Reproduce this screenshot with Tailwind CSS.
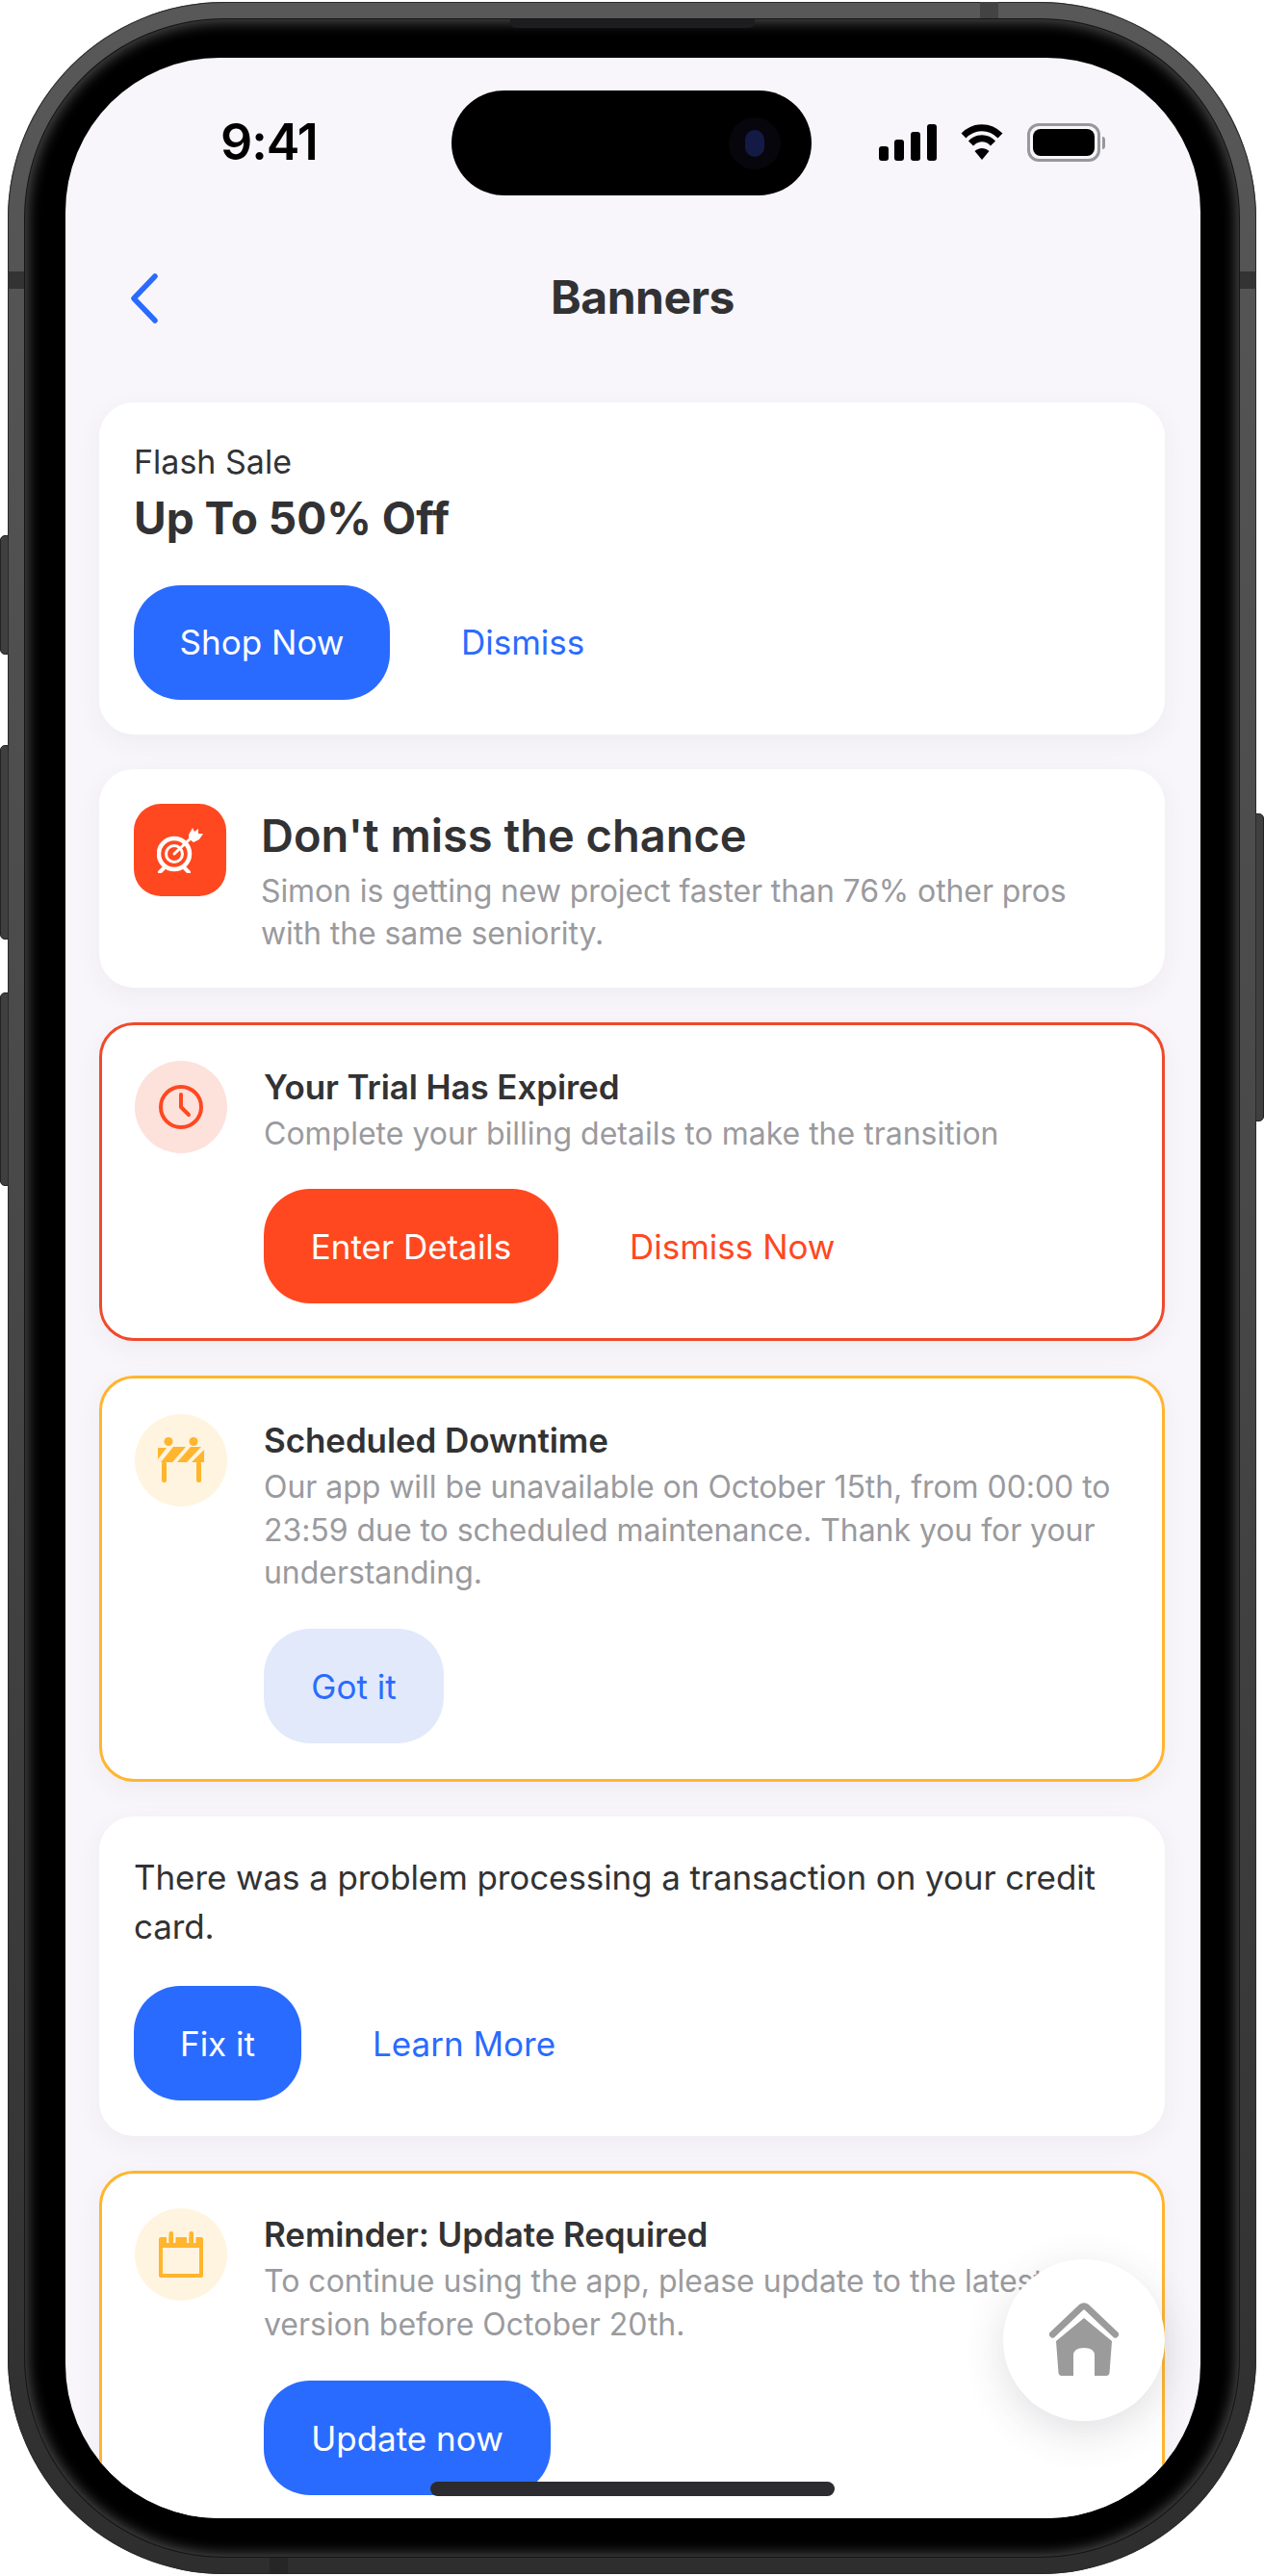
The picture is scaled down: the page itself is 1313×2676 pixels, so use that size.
<!DOCTYPE html>
<html lang="en">
<head>
    <meta charset="UTF-8">
    <meta name="viewport" content="width=device-width, initial-scale=1.0">
    <title>Banners</title>
    <script src="https://cdn.jsdelivr.net/npm/@tailwindcss/browser@4"></script>
</head>
<body class="bg-white font-['Inter',sans-serif] overflow-hidden">
    <div class="relative w-[1313px] h-[2676px]">
        <!-- side buttons -->
        <div class="absolute left-0 top-[556px] w-[10px] h-[124px] rounded-l-[5px] bg-[#3f3f3f] border border-[#222]"></div>
        <div class="absolute left-0 top-[774px] w-[10px] h-[202px] rounded-l-[5px] bg-[#3f3f3f] border border-[#222]"></div>
        <div class="absolute left-0 top-[1031px] w-[10px] h-[201px] rounded-l-[5px] bg-[#3f3f3f] border border-[#222]"></div>
        <div class="absolute right-0 top-[845px] w-[10px] h-[320px] rounded-r-[5px] bg-[#3f3f3f] border border-[#222]"></div>

        <!-- phone frame -->
        <div class="absolute left-[8px] top-[2px] w-[1297px] h-[2672px] rounded-[225px] bg-gradient-to-b from-[#585858] via-[#474747] to-[#2e2e2e] p-[18px] shadow-[inset_0_0_0_1px_#2a2a2a]">
            <!-- antenna bands -->
            <div class="absolute left-[1010px] top-0 w-[19px] h-[18px] bg-[#434343]"></div>
            <div class="absolute left-[272px] bottom-0 w-[19px] h-[18px] bg-[#262626]"></div>
            <div class="absolute left-0 top-[280px] w-[18px] h-[18px] bg-[#333]"></div>
            <div class="absolute right-0 top-[280px] w-[18px] h-[18px] bg-[#333]"></div>

            <div class="relative w-full h-full rounded-[207px] bg-black pl-[42px] pr-[40px] py-[40px] shadow-[inset_0_0_14px_3px_#4c4c4c] ring-1 ring-[#161616]">
                <!-- speaker -->
                <div class="absolute left-[504px] top-0 w-[254px] h-[9px] rounded-b-[6px] bg-[#1d1d1f]"></div>

                <!-- screen -->
                <div class="relative w-full h-full rounded-[160px] bg-[#f8f6fa] overflow-hidden">
                    <!-- status bar -->
                    <div class="flex items-center justify-between h-[176px] pl-[161px] pr-[99px]">
                        <span class="text-[52px] font-semibold text-black tracking-[-1px]">9:41</span>
                        <div class="flex items-center gap-[24px]">
                            <svg width="60" height="38" viewBox="0 0 60 38" fill="#000">
                                <rect x="0" y="23" width="10" height="15" rx="3"/>
                                <rect x="16" y="16" width="10" height="22" rx="3"/>
                                <rect x="33" y="8" width="10" height="30" rx="3"/>
                                <rect x="50" y="0" width="10" height="38" rx="3"/>
                            </svg>
                            <svg width="46" height="38" viewBox="0 0 44 38" fill="none" stroke="#000" stroke-width="7">
                                <path d="M3 12 C14 1 30 1 41 12"/>
                                <path d="M10.500 20 C17 13 27 13 33.500 20"/>
                                <path d="M22 37 L14.500 28 C19 24 25 24 29.500 28 Z" fill="#000" stroke="none"/>
                            </svg>
                            <div class="flex items-center gap-[2px]">
                                <div class="w-[76px] h-[40px] rounded-[12px] border-[3px] border-[#98989c] p-[3px]">
                                    <div class="w-full h-full rounded-[8px] bg-black"></div>
                                </div>
                                <div class="w-[3px] h-[13px] rounded-r-[3px] bg-[#98989c]"></div>
                            </div>
                        </div>
                    </div>

                    <!-- header -->
                    <div class="relative flex items-center justify-center h-[146px] text-[#323234]">
                        <svg class="absolute left-[66px] top-[48px]" width="32" height="52" viewBox="0 0 32 52" fill="none" stroke="#2a6bff" stroke-width="5.500" stroke-linecap="round" stroke-linejoin="round">
                            <path d="M27 3 L5 26 L27 49"/>
                        </svg>
                        <h1 class="text-[48px] font-bold ml-[20px] tracking-[-0.5px]">Banners</h1>
                    </div>

                    <!-- banners -->
                    <div class="flex flex-col gap-[36px] pl-[35px] pr-[37px] pt-[36px]">
                        <div class="rounded-[36px] bg-white px-[36px] pt-[40px] h-[345px] shadow-[0_8px_28px_rgba(60,60,90,0.05)]">
                            <p class="text-[34px] leading-[44px] text-[#323234]">Flash Sale</p>
                            <p class="text-[46px] leading-[60px] mt-[6px] font-bold text-[#323234]">Up To 50% Off</p>
                            <div class="flex items-center gap-[74px] mt-[40px]">
                                <button class="h-[119px] w-[266px] rounded-[48px] bg-[#2a6bff] text-white text-[35px]">Shop Now</button>
                                <span class="text-[35px] text-[#2a6bff]">Dismiss</span>
                            </div>
                        </div>

                        <div class="flex gap-[36px] rounded-[36px] bg-white px-[36px] pt-[36px] h-[227px] shadow-[0_8px_28px_rgba(60,60,90,0.05)]">
                            <div class="flex items-center justify-center shrink-0 w-[96px] h-[96px] rounded-[28px] bg-[#ff4820]">
                                <svg width="48" height="48" viewBox="0 0 48 48" fill="none" stroke="#fff">
                                    <circle cx="18" cy="28" r="16" stroke-width="4.500"/>
                                    <circle cx="18" cy="28" r="8.500" stroke-width="3"/>
                                    <path d="M18 28 L37 10" stroke-width="3" stroke-linecap="round"/>
                                    <path d="M33 8 L37 1 L39 5 L43 2 L43 7 L48 7 L44 13 L38 16 L33 12 Z" fill="#fff" stroke="none"/>
                                    <path d="M8 42 L3 47 M28 42 L33 47" stroke-width="4" stroke-linecap="round"/>
                                </svg>
                            </div>
                            <div>
                                <p class="text-[47px] leading-[46px] mt-[10px] font-semibold text-[#323234]">Don't miss the chance</p>
                                <p class="text-[32px] leading-[44px] mt-[13px] text-[#9a9a9e] tracking-[-0.1px]">Simon is getting new project faster than 76% other pros with the same seniority.</p>
                            </div>
                        </div>

                        <div class="flex gap-[38px] rounded-[36px] bg-white border-[3px] border-[#ef4a2b] px-[34px] pt-[37px] h-[331px] shadow-[0_8px_28px_rgba(60,60,90,0.05)]">
                            <div class="flex items-center justify-center shrink-0 w-[96px] h-[96px] rounded-full bg-[#fde1db]">
                                <svg width="50" height="50" viewBox="0 0 50 50" fill="none" stroke="#ff4820" stroke-width="4" stroke-linecap="round" stroke-linejoin="round">
                                    <circle cx="25" cy="25" r="21"/>
                                    <path d="M25 12 L25 25 L33 33"/>
                                </svg>
                            </div>
                            <div>
                                <p class="text-[35px] leading-[44px] mt-[5px] font-semibold text-[#323234] tracking-[-0.1px]">Your Trial Has Expired</p>
                                <p class="text-[32px] leading-[44px] mt-[5px] text-[#9a9a9e]">Complete your billing details to make the transition</p>
                                <div class="flex items-center gap-[74px] mt-[35px]">
                                    <button class="h-[119px] w-[306px] pt-[2px] rounded-[48px] bg-[#ff4820] text-white text-[35px]">Enter Details</button>
                                    <span class="text-[35px] pt-[2px] text-[#ff4820]">Dismiss Now</span>
                                </div>
                            </div>
                        </div>

                        <div class="flex gap-[38px] rounded-[36px] bg-white border-[3px] border-[#ffb52e] px-[34px] pt-[37px] h-[422px] shadow-[0_8px_28px_rgba(60,60,90,0.05)]">
                            <div class="flex items-center justify-center shrink-0 w-[96px] h-[96px] rounded-full bg-[#fff4df]">
                                <svg width="48" height="48" viewBox="0 0 48 48" fill="#ffb52e">
                                    <circle cx="11" cy="4.500" r="4.500"/>
                                    <circle cx="37" cy="4.500" r="4.500"/>
                                    <path d="M0 11 H9 L0 23 Z"/>
                                    <path d="M16 10 H29 L15 26 H3 Z"/>
                                    <path d="M34 10 H45 L30 26 H20 Z"/>
                                    <path d="M48 13 V26 H35 Z"/>
                                    <rect x="4" y="25" width="5" height="22" rx="2.500"/>
                                    <rect x="40" y="25" width="5" height="22" rx="2.500"/>
                                </svg>
                            </div>
                            <div>
                                <p class="text-[35px] leading-[44px] mt-[5px] font-semibold text-[#323234] tracking-[-0.1px]">Scheduled Downtime</p>
                                <p class="text-[32px] leading-[44.500px] mt-[5px] text-[#9a9a9e] tracking-[-0.05px]">Our app will be unavailable on October 15th, from 00:00 to 23:59 due to scheduled maintenance. Thank you for your understanding.</p>
                                <button class="mt-[35px] h-[119px] w-[187px] pt-[2px] rounded-[48px] bg-[#e1e9fb] text-[#2a6bff] text-[35px]">Got it</button>
                            </div>
                        </div>

                        <div class="rounded-[36px] bg-white px-[36px] pt-[38px] h-[332px] shadow-[0_8px_28px_rgba(60,60,90,0.05)]">
                            <p class="text-[35px] leading-[51px] text-[#323234] tracking-[-0.1px]">There was a problem processing a transaction on your credit card.</p>
                            <div class="flex items-center gap-[74px] mt-[36px]">
                                <button class="h-[119px] w-[174px] pt-[2px] rounded-[48px] bg-[#2a6bff] text-white text-[35px]">Fix it</button>
                                <span class="text-[35px] pt-[2px] text-[#2a6bff]">Learn More</span>
                            </div>
                        </div>

                        <div class="flex gap-[38px] rounded-[36px] bg-white border-[3px] border-[#ffb52e] px-[34px] pt-[36px] h-[500px] shadow-[0_8px_28px_rgba(60,60,90,0.05)]">
                            <div class="flex items-center justify-center shrink-0 w-[96px] h-[96px] rounded-full bg-[#fff4df]">
                                <svg width="46" height="48" viewBox="0 0 46 48" fill="#ffb52e">
                                    <path d="M2 6 H44 Q46 6 46 8 V46 Q46 48 44 48 H2 Q0 48 0 46 V8 Q0 6 2 6 Z M4 17 V44 H42 V17 Z" fill-rule="evenodd"/>
                                    <rect x="8" y="2" width="2.500" height="10" fill="#fff4df"/>
                                    <rect x="15" y="2" width="2.500" height="10" fill="#fff4df"/>
                                    <rect x="29" y="2" width="2.500" height="10" fill="#fff4df"/>
                                    <rect x="36" y="2" width="2.500" height="10" fill="#fff4df"/>
                                    <rect x="10.500" y="0" width="4.500" height="12" rx="2"/>
                                    <rect x="31.500" y="0" width="4.500" height="12" rx="2"/>
                                </svg>
                            </div>
                            <div>
                                <p class="text-[35px] leading-[44px] mt-[5px] font-semibold text-[#323234] tracking-[-0.1px]">Reminder: Update Required</p>
                                <p class="text-[32px] leading-[44.500px] mt-[5px] text-[#9a9a9e]">To continue using the app, please update to the latest version before October 20th.</p>
                                <button class="mt-[36px] h-[119px] w-[298px] pt-[2px] rounded-[48px] bg-[#2a6bff] text-white text-[35px]">Update now</button>
                            </div>
                        </div>
                    </div>

                    <!-- floating home button -->
                    <div class="absolute left-[974px] top-[2287px] flex items-center justify-center w-[168px] h-[168px] rounded-full bg-white shadow-[0_12px_44px_rgba(60,60,80,0.16)]">
                        <svg width="72" height="78" viewBox="0 0 72 78" fill="#9b9b9b">
                            <path d="M3.500 33 L33 5 Q36 2.500 39 5 L68.500 33" fill="none" stroke="#9b9b9b" stroke-width="7" stroke-linecap="round" stroke-linejoin="round"/>
                            <path d="M36 16 L65 40 L62.500 73 Q62 76 59 76 H47 V55 Q47 47 36 47 Q25 47 25 55 V76 H13 Q10 76 9.500 73 L7 40 Z"/>
                        </svg>
                    </div>

                    <!-- home indicator -->
                    <div class="absolute left-[379px] top-[2518px] w-[420px] h-[15px] rounded-full bg-[#2b2b30]"></div>
                </div>

                <!-- dynamic island -->
                <div class="absolute left-[443px] top-[74px] flex items-center justify-end w-[374px] h-[109px] rounded-full bg-black pr-[32px]">
                    <div class="flex items-center justify-center w-[54px] h-[54px] rounded-full bg-[#07060c]">
                        <div class="w-[20px] h-[28px] rounded-full bg-[#141a46]"></div>
                    </div>
                </div>
            </div>
        </div>
    </div>
</body>
</html>
